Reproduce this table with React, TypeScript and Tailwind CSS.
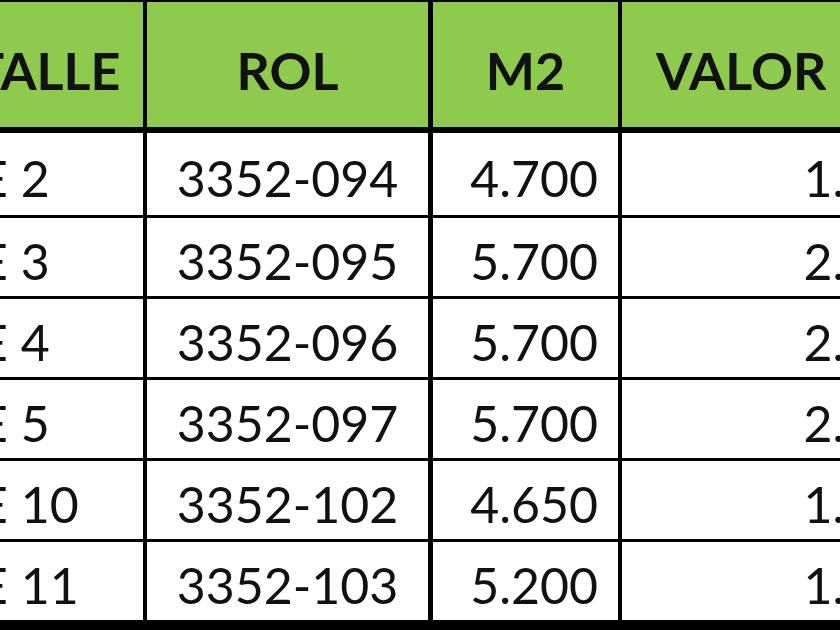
import React from "react";

const rows = [
  { lote: "LOTE 2", rol: "3352-094", m2: "4.700", valor: "1.645.000" },
  { lote: "LOTE 3", rol: "3352-095", m2: "5.700", valor: "2.280.000" },
  { lote: "LOTE 4", rol: "3352-096", m2: "5.700", valor: "2.280.000" },
  { lote: "LOTE 5", rol: "3352-097", m2: "5.700", valor: "2.280.000" },
  { lote: "LOTE 10", rol: "3352-102", m2: "4.650", valor: "1.627.500" },
  { lote: "LOTE 11", rol: "3352-103", m2: "5.200", valor: "1.820.000" },
];

const heights = ["h-[82px]", "h-[78px]", "h-[78px]", "h-[78px]", "h-[78px]", "h-[78px]"];

export default function App() {
  return (
    <div className="w-[840px] h-[630px] overflow-hidden bg-white text-[#111]" style={{ fontFamily: "Lato, 'Liberation Sans', sans-serif" }}>
      <div className="ml-[-119px] w-[1300px]">
        <div className="flex border-t-[2px] border-b-[6px] border-black bg-[#8dca4e] h-[133px] font-bold text-[52px] leading-none">
          <div className="w-[266px] shrink-0 border-r-[4px] border-black flex items-center justify-center pt-[10px]">DETALLE</div>
          <div className="w-[286px] shrink-0 border-r-[5px] border-black flex items-center justify-center pt-[10px]">ROL</div>
          <div className="w-[189px] shrink-0 border-r-[4px] border-black flex items-center justify-center pt-[10px]">M2</div>
          <div className="w-[420px] shrink-0 flex items-center justify-start pl-[34px] pt-[10px]">VALOR</div>
        </div>
        {rows.map((r, i) => (
          <div key={r.rol} className={`flex ${i === rows.length - 1 ? "border-b-[10px]" : "border-b-[3px]"} border-black text-[50px] leading-none`}>
            <div className={`w-[266px] shrink-0 border-r-[4px] border-black flex items-center justify-start pl-[6px] pt-[8px] ${heights[i]}`}>{r.lote}</div>
            <div className={`w-[286px] shrink-0 border-r-[5px] border-black flex items-center justify-center pt-[8px] ${heights[i]}`}>{r.rol}</div>
            <div className={`w-[189px] shrink-0 border-r-[4px] border-black flex items-center justify-end pr-[20px] pt-[8px] ${heights[i]}`}>{r.m2}</div>
            <div className={`w-[420px] shrink-0 flex items-center justify-end pr-[12px] pt-[8px] ${heights[i]}`}>{r.valor}</div>
          </div>
        ))}
      </div>
    </div>
  );
}
